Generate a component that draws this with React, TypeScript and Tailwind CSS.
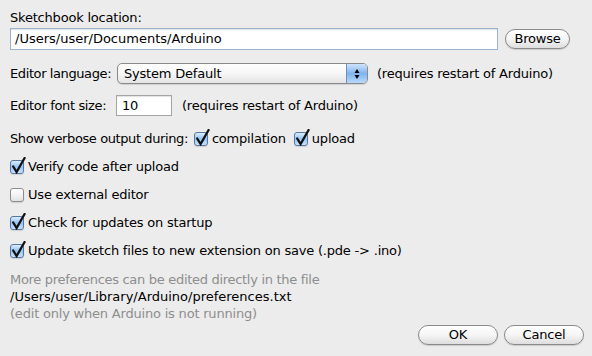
import React from "react";

function Check({ checked }: { checked: boolean }) {
  return (
    <span className="relative inline-block w-[14px] h-[14px] shrink-0">
      <span
        className={
          checked
            ? "absolute inset-0 rounded-[3px] border border-[#5577a6] bg-linear-to-b from-[#dcecfc] via-[#94c2f2] to-[#c9e3fc] shadow-[0_1px_1px_rgba(0,0,0,0.12)]"
            : "absolute inset-0 rounded-[3px] border border-[#8c8c8c] bg-linear-to-b from-white via-[#f3f3f3] to-[#e2e2e2] shadow-[0_1px_1px_rgba(0,0,0,0.12)]"
        }
      />
      {checked && (
        <svg
          className="absolute left-[1px] top-[-3px]"
          width="15"
          height="17"
          viewBox="0 0 15 17"
        >
          <path
            d="M2.2 9.5 L5.6 15 L13.6 1"
            fill="none"
            stroke="#111"
            strokeWidth="2.3"
            strokeLinecap="round"
            strokeLinejoin="miter"
          />
        </svg>
      )}
    </span>
  );
}

function AquaButton({ children, w }: { children: React.ReactNode; w: string }) {
  return (
    <div
      className={`${w} h-[20px] rounded-full border border-[#8a8a8a] bg-linear-to-b from-white via-[#f5f5f5] to-[#dedede] shadow-[0_1px_1px_rgba(0,0,0,0.15)] flex items-center justify-center leading-[16px]`}
    >
      {children}
    </div>
  );
}

export default function App() {
  return (
    <div className="w-[592px] h-[356px] bg-[#ececec] font-['DejaVu_Sans',sans-serif] text-[13px] leading-[16px] tracking-[-0.2px] text-black flex flex-col pl-[10px] pr-[8px] overflow-hidden whitespace-nowrap">
      <div className="mt-[10px]">Sketchbook location:</div>

      <div className="mt-[2px] flex items-center gap-[7px]">
        <div className="w-[488px] h-[22px] border border-[#9db3cb] bg-white flex items-center pl-[4px] tracking-normal shadow-[inset_0_1px_1px_rgba(0,0,0,0.12)]">
          /Users/user/Documents/Arduino
        </div>
        <AquaButton w="w-[65px]">Browse</AquaButton>
      </div>

      <div className="mt-[13px] flex items-center">
        <div className="w-[107px] shrink-0 tracking-[-0.4px]">Editor language:</div>
        <div className="w-[251px] h-[21px] rounded-[5px] border border-[#8a8a8a] bg-linear-to-b from-white via-[#f6f6f6] to-[#e4e4e4] shadow-[0_1px_1px_rgba(0,0,0,0.12)] flex items-stretch overflow-hidden">
          <div className="flex-1 flex items-center pl-[6px]">System Default</div>
          <div className="w-[21px] border-l border-[#6f8fb8] bg-linear-to-b from-[#cfe4fb] via-[#7fb4ee] to-[#b9d9fa] flex items-center justify-center">
            <svg width="6" height="12" viewBox="0 0 6 12">
              <polygon points="3,1 5.5,5 0.5,5" fill="#000" />
              <polygon points="0.5,7 5.5,7 3,11" fill="#000" />
            </svg>
          </div>
        </div>
        <div className="ml-[9px]">(requires restart of Arduino)</div>
      </div>

      <div className="mt-[11px] flex items-center">
        <div className="w-[106px] shrink-0 tracking-[-0.35px]">Editor font size:</div>
        <div className="w-[56px] h-[21px] border border-[#a5a5a5] bg-white flex items-center pl-[5px] shadow-[inset_0_1px_1px_rgba(0,0,0,0.12)]">
          10
        </div>
        <div className="ml-[10px]">(requires restart of Arduino)</div>
      </div>

      <div className="mt-[15px] h-[16px] flex items-center">
        <span className="tracking-[-0.4px]">Show verbose output during:</span>
        <span className="ml-[6px] flex items-center">
          <Check checked />
        </span>
        <span className="ml-[4px]">compilation</span>
        <span className="ml-[8px] flex items-center">
          <Check checked />
        </span>
        <span className="ml-[4px]">upload</span>
      </div>

      <div className="mt-[12px] h-[16px] flex items-center gap-[4px]">
        <Check checked />
        <span>Verify code after upload</span>
      </div>
      <div className="mt-[12px] h-[16px] flex items-center gap-[4px]">
        <Check checked={false} />
        <span>Use external editor</span>
      </div>
      <div className="mt-[12px] h-[16px] flex items-center gap-[4px]">
        <Check checked />
        <span>Check for updates on startup</span>
      </div>
      <div className="mt-[12px] h-[16px] flex items-center gap-[4px]">
        <Check checked />
        <span>Update sketch files to new extension on save (.pde -&gt; .ino)</span>
      </div>

      <div className="mt-[12px] leading-[17px]">
        <div className="text-[#8e8e8e] tracking-[-0.3px]">More preferences can be edited directly in the file</div>
        <div className="tracking-normal">/Users/user/Library/Arduino/preferences.txt</div>
        <div className="text-[#8e8e8e]">(edit only when Arduino is not running)</div>
      </div>

      <div className="mt-[3px] flex justify-end gap-[6px]">
        <AquaButton w="w-[80px]">OK</AquaButton>
        <AquaButton w="w-[80px]">Cancel</AquaButton>
      </div>
    </div>
  );
}
